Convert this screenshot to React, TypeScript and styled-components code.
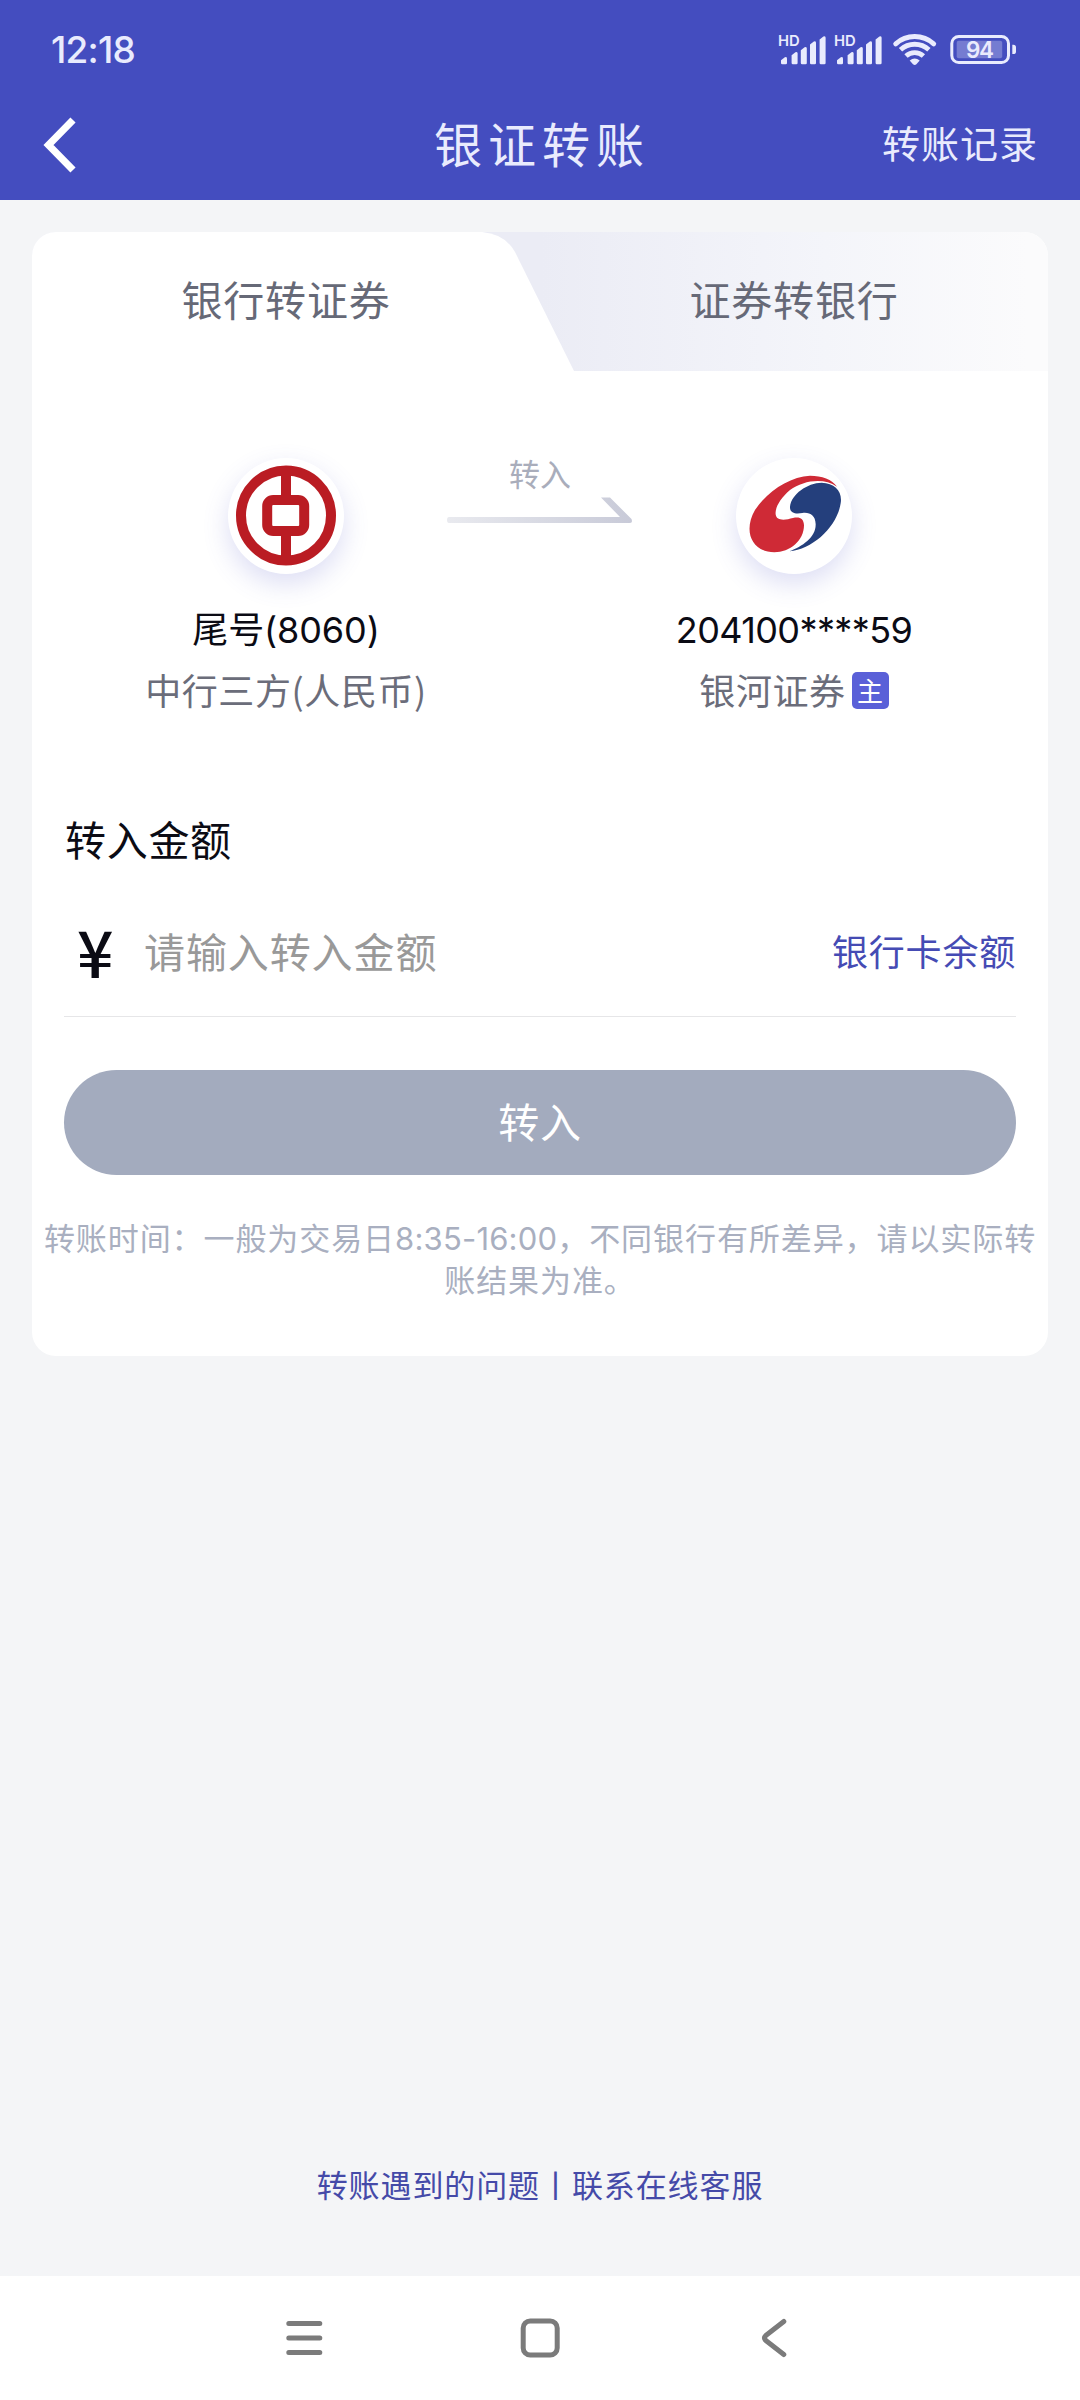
import React from "react";
import styled, { createGlobalStyle } from "styled-components";

const GlobalStyle = createGlobalStyle`
  * { box-sizing: border-box; }
  body { margin: 0; background: #f4f5f7; }
`;

const Screen = styled.div`
  width: 1080px;
  height: 2400px;
  display: flex;
  flex-direction: column;
  background: #f4f5f7;
  font-family: "Noto Sans CJK SC", sans-serif;
  font-weight: 400;
  color: #0b0b14;
  white-space: nowrap;
`;

const TopArea = styled.div`
  height: 200px;
  flex: none;
  background: #444dbf;
  color: #e9ebfd;
`;

const StatusBar = styled.div`
  height: 100px;
  padding: 0 64px 0 51px;
  display: flex;
  align-items: center;
  justify-content: space-between;
`;

const Clock = styled.span`
  font: 500 37px/44px Inter, sans-serif;
  letter-spacing: -0.8px;
`;

const StatusIcons = styled.svg`
  width: 238px;
  height: 36px;
  display: block;
  overflow: visible;
`;

const NavBar = styled.div`
  height: 90px;
  display: grid;
  grid-template-columns: 1fr auto 1fr;
  align-items: center;
  padding: 0 42px 0 41px;
`;

const BackIcon = styled.svg`
  width: 33px;
  height: 56px;
  margin-left: 2px;
  display: block;
`;

const Title = styled.h1`
  margin: 0 -5px 0 0;
  padding-bottom: 6px;
  font-size: 48px;
  line-height: 60px;
  font-weight: 400;
  letter-spacing: 6px;
`;

const HeaderLink = styled.span`
  justify-self: end;
  padding-bottom: 6px;
  font-size: 38px;
  line-height: 50px;
  letter-spacing: 1px;
`;

const Card = styled.main`
  margin: 32px 32px 0;
  height: 1124px;
  flex: none;
  display: flex;
  flex-direction: column;
  background: #fff;
  border-radius: 24px;
  overflow: hidden;
`;

const Tabs = styled.div`
  position: relative;
  height: 139px;
  flex: none;
  display: grid;
  grid-template-columns: 1fr 1fr;
  background: linear-gradient(90deg, #ebecf5 50%, #f4f5fa 78%, #fbfbfc 98%);
`;

const TabShape = styled.svg`
  position: absolute;
  left: 0;
  top: 0;
  width: 545px;
  height: 139px;
`;

const Tab = styled.div`
  position: relative;
  display: flex;
  align-items: center;
  justify-content: center;
  padding-bottom: 7px;
  font-size: 41px;
  line-height: 56px;
  letter-spacing: 0.8px;
  color: #666977;
`;

const Accounts = styled.section`
  height: 409px;
  flex: none;
  padding-top: 87px;
  display: grid;
  grid-template-columns: 508px 508px;
  position: relative;
`;

const Account = styled.div`
  display: flex;
  flex-direction: column;
  align-items: center;
`;

const Badge = styled.div`
  width: 116px;
  height: 116px;
  border-radius: 50%;
  background: #fff;
  box-shadow: 0 10px 26px rgba(84, 92, 200, 0.2);
`;

const Logo = styled.svg`
  width: 116px;
  height: 116px;
  display: block;
`;

const AccountNo = styled.div`
  margin-top: 30px;
  font-family: Inter, "Noto Sans CJK SC", sans-serif;
  font-size: 36px;
  line-height: 52px;
  letter-spacing: ${(p: { $spacing?: number }) => p.$spacing ?? 0}px;
`;

const AccountName = styled.div`
  margin-top: 7px;
  height: 52px;
  display: flex;
  align-items: center;
  gap: 6px;
  font-size: 36px;
  line-height: 52px;
  letter-spacing: 0.6px;
  color: #6b6d7a;
`;

const MainTag = styled.span`
  width: 37px;
  height: 37px;
  margin-top: 2px;
  border-radius: 5px;
  background: #5a60d8;
  color: #fff;
  font-size: 26px;
  line-height: 35px;
  text-align: center;
`;

const Direction = styled.div`
  position: absolute;
  left: 415px;
  top: 79px;
  width: 186px;
  display: flex;
  flex-direction: column;
  align-items: center;
  font-size: 31px;
  line-height: 46px;
  color: #a9adbb;
`;

const Arrow = styled.svg`
  width: 186px;
  height: 27px;
  margin-top: 1px;
  display: block;
`;

const Form = styled.section`
  padding: 0 32px;
  display: flex;
  flex-direction: column;
`;

const Label = styled.label`
  height: 56px;
  margin-top: 30px;
  padding-left: 1px;
  font-size: 41px;
  line-height: 56px;
  letter-spacing: 0.7px;
`;

const AmountRow = styled.div`
  height: 151px;
  display: flex;
  align-items: center;
  padding: 18px 0 0 13px;
  border-bottom: 1px solid #e6e6e8;
`;

const Yen = styled.span`
  width: 67px;
  font-size: 64px;
  line-height: 70px;
  font-weight: 500;
`;

const Placeholder = styled.span`
  flex: 1;
  font-size: 41px;
  line-height: 56px;
  letter-spacing: 0.9px;
  color: #999;
`;

const BalanceLink = styled.a`
  font-size: 36px;
  line-height: 50px;
  letter-spacing: 0.8px;
  color: #454bb4;
`;

const Submit = styled.button`
  margin-top: 53px;
  height: 105px;
  border: 0;
  border-radius: 53px;
  background: #a3abbe;
  color: #fff;
  font: 400 41px/56px "Noto Sans CJK SC", sans-serif;
  letter-spacing: 0.8px;
  padding: 0 0 5px;
`;

const Note = styled.p`
  margin: 43px 0 0;
  font-family: Inter, "Noto Sans CJK SC", sans-serif;
  font-size: 31px;
  line-height: 42px;
  letter-spacing: 0.92px;
  text-align: center;
  color: #a9afc0;
`;

const NoteTime = styled.span`
  letter-spacing: 0.2px;
`;

const Help = styled.footer`
  flex: 1;
  display: flex;
  align-items: flex-end;
  justify-content: center;
  padding-bottom: 69px;
  font-size: 31px;
  line-height: 46px;
  letter-spacing: 0.9px;
  color: #454aa8;
`;

const SystemNav = styled.nav`
  height: 124px;
  flex: none;
  background: #fff;
  display: flex;
  align-items: center;
  justify-content: center;
  gap: 195px;
`;

const NavIcon = styled.svg`
  width: 40px;
  height: 40px;
  fill: none;
  stroke: #7b7b7b;
  stroke-width: 5;
  stroke-linecap: round;
  stroke-linejoin: round;
`;

const BARS: [number, number][] = [[3, 24.7], [13.6, 19.7], [22.8, 14.7], [32, 9], [41.6, 4]];

function Signal({ x }: { x: number }) {
  return (
    <g transform={`translate(${x} 0)`}>
      <text x="0" y="13.600" fontSize="14.800" fontWeight="600" fontFamily="Inter, sans-serif">HD</text>
      {BARS.map(([bx, top]) => (
        <path
          key={bx}
          d={`M${bx} ${top + 3.6} L${bx + 3.8} ${top + 0.6} Q${bx + 6} ${top - 0.6} ${bx + 6} ${top + 1.8} V31 Q${bx + 6} 32.3 ${bx + 4.7} 32.3 H${bx + 1.3} Q${bx} 32.3 ${bx} 31Z`}
        />
      ))}
    </g>
  );
}

export default function App() {
  return (
    <Screen>
      <GlobalStyle />
      <TopArea>
        <StatusBar>
          <Clock>12:18</Clock>
          <StatusIcons viewBox="0 0 238 36" fill="#e9ebfd">
            <Signal x={0} />
            <Signal x={56} />
            <g fill="none" stroke="#e9ebfd" strokeWidth="4.900">
              <path d="M117.700 11.800 A28.500 28.500 0 0 1 155.700 11.800" strokeLinecap="round" />
              <path d="M122.500 17.800 A21 21 0 0 1 150.900 17.800" />
              <path d="M128 24 A13 13 0 0 1 145.400 24" />
            </g>
            <path d="M131.700 28.600 Q136.700 24.600 141.700 28.600 L138.400 32.200 Q136.700 33.800 135 32.200Z" />
            <rect x="173.800" y="4.500" width="56.700" height="26" rx="7" fill="none" stroke="#e9ebfd" strokeWidth="3" />
            <rect x="178.700" y="8.800" width="45.500" height="17.500" rx="2" opacity="0.3" />
            <path d="M234.300 12.700 h1 q2.700 0 2.700 2.700 v4 q0 2.700 -2.700 2.700 h-1z" />
            <text x="201.300" y="26" fontSize="22.500" fontWeight="600" textAnchor="middle" fontFamily="Inter, sans-serif" letterSpacing="-1.500">94</text>
          </StatusIcons>
        </StatusBar>
        <NavBar>
          <BackIcon viewBox="0 0 33 56">
            <path d="M30 3 L5.500 28 L30 53" fill="none" stroke="#fff" strokeWidth="7.200" />
          </BackIcon>
          <Title>银证转账</Title>
          <HeaderLink>转账记录</HeaderLink>
        </NavBar>
      </TopArea>

      <Card>
        <Tabs>
          <TabShape viewBox="0 0 545 139">
            <path d="M0 0 H450 Q473 2 483 20 L542 139 H0Z" fill="#fff" />
          </TabShape>
          <Tab>银行转证券</Tab>
          <Tab>证券转银行</Tab>
        </Tabs>

        <Accounts>
          <Account>
            <Badge>
              <Logo viewBox="0 0 116 116">
                <g fill="none" stroke="#ba1c23" strokeWidth="10">
                  <circle cx="58" cy="57.500" r="45" />
                  <rect x="39.200" y="42" width="37" height="31" rx="6" />
                  <path d="M58 12 V42 M58 73 V103" />
                </g>
              </Logo>
            </Badge>
            <AccountNo $spacing={-0.1}>尾号(8060)</AccountNo>
            <AccountName>中行三方(人民币)</AccountName>
          </Account>
          <Account>
            <Badge>
              <Logo viewBox="288 84 348 348">
                <path
                  fill="#cf2a36"
                  d="M591 170 C577 148 545 137 510 137 C448 140 382 184 345 240 C308 304 336 366 403 367 C450 367 492 332 492 286 C491 264 478 260 459 264 C442 268 425 273 412 264 C398 250 412 212 450 180 C490 152 550 142 591 170Z"
                />
                <path
                  fill="#243f7c"
                  d="M448 364 C487 349 528 322 527 282 C526 255 509 246 487 249 C470 252 449 252 450 230 C454 192 502 159 545 158 C586 159 608 185 602 220 C592 288 520 358 448 364Z"
                />
              </Logo>
            </Badge>
            <AccountNo $spacing={-0.6}>204100****59</AccountNo>
            <AccountName>
              银河证券<MainTag>主</MainTag>
            </AccountName>
          </Account>
          <Direction>
            转入
            <Arrow viewBox="0 0 186 27">
              <defs>
                <linearGradient id="arrowFade" x1="0" x2="1" y1="0" y2="0">
                  <stop offset="0" stopColor="#e9eaef" />
                  <stop offset="1" stopColor="#c8cad8" />
                </linearGradient>
              </defs>
              <path d="M2 20 H173 L154 0.500 H163 L184.500 22 Q186 26 183 26 H2 Q0 26 0 23 Q0 20 2 20Z" fill="url(#arrowFade)" />
            </Arrow>
          </Direction>
        </Accounts>

        <Form>
          <Label>转入金额</Label>
          <AmountRow>
            <Yen>¥</Yen>
            <Placeholder>请输入转入金额</Placeholder>
            <BalanceLink>银行卡余额</BalanceLink>
          </AmountRow>
          <Submit>转入</Submit>
        </Form>
        <Note>
          转账时间：一般为交易日<NoteTime>8:35-16:00</NoteTime>，不同银行有所差异，请以实际转
          <br />
          账结果为准。
        </Note>
      </Card>

      <Help>转账遇到的问题丨联系在线客服</Help>

      <SystemNav>
        <NavIcon viewBox="0.700 0 40 40">
          <path d="M4.500 5.500 H35.500 M4.500 20 H35.500 M4.500 34.500 H35.500" />
        </NavIcon>
        <NavIcon viewBox="0 0 40 40">
          <rect x="3.200" y="3" width="34" height="34" rx="7" />
        </NavIcon>
        <NavIcon viewBox="0.700 0 40 40">
          <path d="M29.500 3.500 L11.500 17.500 Q9 20 11.500 22.500 L29.500 36.500" />
        </NavIcon>
      </SystemNav>
    </Screen>
  );
}
